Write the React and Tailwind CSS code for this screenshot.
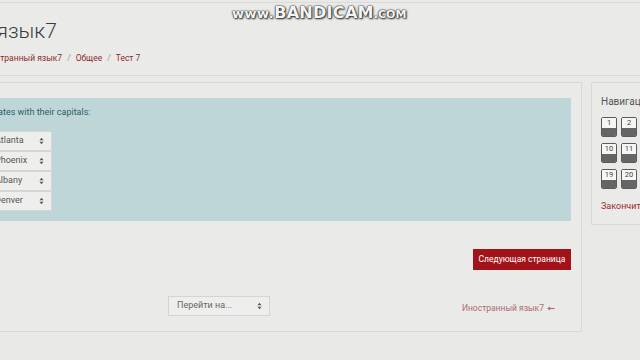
function Arrows({ className = '' }) {
  return (
    <svg viewBox="0 0 6 10" className={className} fill="currentColor">
      <path d="M3 1 L5.5 4 L0.5 4 Z" />
      <path d="M3 9 L5.5 6 L0.5 6 Z" />
    </svg>
  )
}

function Watermark() {
  return (
    <div className="absolute left-[232px] top-[1px] flex items-baseline whitespace-nowrap font-['DejaVu_Sans',sans-serif] font-bold text-[#f4f4f4] [text-shadow:0_0_1px_#222,0_0_2px_#222,1px_1px_2px_#333]">
      <span className="text-[13px] tracking-[0.5px]">www.</span>
      <span className="text-[16px] tracking-[0.3px]">BANDICAM</span>
      <span className="text-[11px]">.COM</span>
    </div>
  )
}

function NavButton({ n }) {
  return (
    <div className="w-[16px] h-[20px] rounded-[2px] border border-[#5a5b5b] overflow-hidden flex flex-col">
      <div className="h-[10px] bg-[#f6f6f5] text-[7.5px] leading-[10px] text-center text-[#444]">{n}</div>
      <div className="flex-1 bg-[#646565]" />
    </div>
  )
}

const rows = [
  ['Georgia', 'Atlanta'],
  ['Arizona', 'Phoenix'],
  ['New York', 'Albany'],
  ['Colorado', 'Denver'],
]

export default function App() {
  return (
    <div className="relative w-[640px] h-[360px] overflow-hidden bg-[#e9eae7] font-['Roboto',sans-serif] pt-[2px]">
      <div className="h-[74px] border-y border-[#dadbd8] bg-[#eaebe8] w-[700px] pt-[14px]">
        <h1 className="text-[21px] leading-[28px] font-light text-[#3a3c3e] whitespace-nowrap -ml-[142px]">Иностранный язык7</h1>
        <nav className="mt-[6px] text-[8.5px] leading-[14px] text-[#8a2b2b] whitespace-nowrap -ml-[20px] flex gap-[5px]">
          <span>Иностранный язык7</span>
          <span className="text-[#999]">/</span>
          <span>Общее</span>
          <span className="text-[#999]">/</span>
          <span>Тест 7</span>
        </nav>
      </div>

      <div className="mt-[6px] -ml-[100px] flex items-start gap-[9px]">
        <div className="w-[682px] h-[250px] shrink-0 border border-[#d9dad7] bg-[#eaebe8] pt-[15px] px-[10px]">
          <div className="h-[123px] bg-[#bfd6d9] pl-[37px] pt-[8px]">
            <p className="text-[9px] leading-[12px] text-[#2b5f64] whitespace-nowrap">Match the states with their capitals:</p>
            <div className="mt-[13px] flex flex-col">
              {rows.map(([state, city]) => (
                <div key={state} className="flex items-center h-[20px]">
                  <div className="w-[38px] text-[9px] text-[#2b5f64] whitespace-nowrap overflow-hidden">{state}</div>
                  <div className="w-[66px] h-[20px] bg-[#eeefed] border border-[#d3d6d5] flex items-center justify-between pl-[8px] pr-[7px] text-[9px] text-[#555]">
                    <span>{city}</span>
                    <Arrows className="w-[5px] h-[8px] text-[#555]" />
                  </div>
                </div>
              ))}
            </div>
          </div>

          <div className="mt-[28px] flex justify-end">
            <button className="w-[98px] h-[21px] bg-[#a11319] text-white text-[8.5px] leading-[21px] whitespace-nowrap">Следующая страница</button>
          </div>

          <div className="mt-[26px] flex items-center">
            <div className="w-[257px]" />
            <div className="w-[102px] h-[20px] bg-[#eeefed] border border-[#d3d5d3] flex items-center justify-between pl-[8px] pr-[7px] text-[9px] text-[#666]">
              <span>Перейти на...</span>
              <Arrows className="w-[5px] h-[8px] text-[#555]" />
            </div>
            <div className="flex-1 flex justify-end items-center pr-[16px] pt-[4px] text-[8.5px] text-[#b06a6e] gap-[3px]">
              <span>Иностранный язык7</span>
              <svg viewBox="0 0 10 6" className="w-[8px] h-[5px]" fill="currentColor">
                <path d="M0 3 L4 0.5 L4 5.5 Z" />
                <rect x="3.5" y="2.3" width="6" height="1.4" />
              </svg>
            </div>
          </div>
        </div>

        <div className="w-[140px] h-[143px] shrink-0 border border-[#d9dad7] bg-[#eaebe8] pt-[12px] pl-[9px]">
          <div className="text-[10px] leading-[14px] text-[#555] whitespace-nowrap">Навигация по тесту</div>
          <div className="mt-[8px] grid grid-cols-[16px_16px_16px] gap-x-[4px] gap-y-[6px]">
            {[1, 2, 3, 10, 11, 12, 19, 20, 21].map((n) => (
              <NavButton key={n} n={n} />
            ))}
          </div>
          <div className="mt-[10px] text-[9px] leading-[14px] text-[#a3282b] whitespace-nowrap">Закончить попытку...</div>
        </div>
      </div>

      <Watermark />
    </div>
  )
}
